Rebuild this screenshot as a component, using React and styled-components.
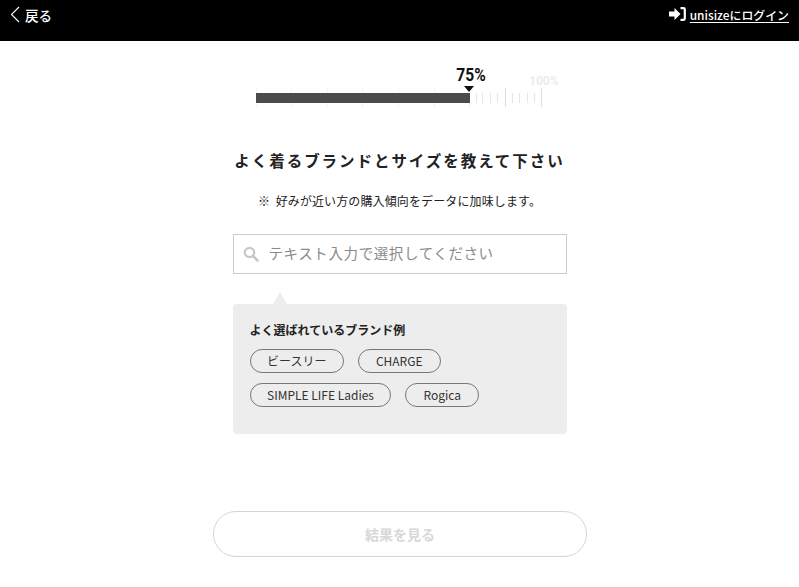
import React from "react";
import styled, { createGlobalStyle } from "styled-components";

const Global = createGlobalStyle`
  html, body { margin: 0; padding: 0; background: #fff; }
  body { font-family: "Noto Sans CJK JP", "Noto Sans", sans-serif; color: #222; overflow: hidden; }
  * { box-sizing: border-box; }
`;

const Page = styled.div`
  width: 799px;
  height: 587px;
  display: flex;
  flex-direction: column;
  align-items: center;
  overflow: hidden;
`;

const Header = styled.header`
  width: 100%;
  height: 41px;
  background: #000;
  color: #fff;
  display: flex;
  align-items: flex-start;
  justify-content: space-between;
  padding: 4px 10px 0 10px;
`;

const Back = styled.a`
  display: flex;
  align-items: center;
  gap: 5px;
  height: 21px;
  font-size: 13.5px;
  font-weight: 500;
  color: #fff;
`;

const Login = styled.a`
  display: flex;
  align-items: center;
  gap: 4px;
  height: 20px;
  font-size: 11.9px;
  font-weight: 500;
  color: #fff;
  text-decoration: underline;
  text-underline-offset: 2px;
`;

const Progress = styled.div`
  width: 300px;
  height: 70px;
  margin: 20px 0 0 1px;
  position: relative;
  flex: none;
`;

const Percent = styled.div`
  position: absolute;
  left: 203px;
  top: 2px;
  width: 36px;
  text-align: center;
  font-family: "Roboto", sans-serif;
  font-size: 19px;
  line-height: 24px;
  font-weight: 700;
  color: #111;
  transform: scaleX(0.82);
`;

const Max = styled.div`
  position: absolute;
  left: 279px;
  top: 13px;
  font-family: "Roboto", sans-serif;
  font-size: 12px;
  line-height: 14px;
  font-weight: 700;
  color: #ececec;
`;

const Marker = styled.div`
  position: absolute;
  left: 214px;
  top: 25px;
  width: 0;
  height: 0;
  border-left: 5px solid transparent;
  border-right: 5px solid transparent;
  border-top: 6px solid #111;
`;

const Scale = styled.svg`
  position: absolute;
  left: 0;
  top: 0;
`;

const Title = styled.h1`
  margin: 18px 0 0;
  font-size: 15.5px;
  line-height: 22px;
  letter-spacing: 1.95px;
  font-weight: 700;
  color: #222;
`;

const Note = styled.p`
  margin: 21px 0 0;
  font-size: 12px;
  line-height: 18px;
  font-weight: 400;
  letter-spacing: 0.12px;
  color: #222;
  white-space: pre;
`;

const Search = styled.div`
  width: 334px;
  height: 40px;
  margin-top: 24px;
  border: 1px solid #ccc;
  display: flex;
  align-items: center;
  gap: 10px;
  padding-left: 9px;
  flex: none;
`;

const Placeholder = styled.span`
  font-size: 14.5px;
  line-height: 20px;
  margin-top: -2px;
  color: #8a8a8a;
  letter-spacing: 0.6px;
`;

const Panel = styled.section`
  position: relative;
  width: 334px;
  height: 130px;
  margin-top: 30px;
  background: #ededed;
  border-radius: 4px;
  padding: 17px 17px 0;
  flex: none;
  &::before {
    content: "";
    position: absolute;
    left: 40px;
    top: -12px;
    border-left: 7px solid transparent;
    border-right: 7px solid transparent;
    border-bottom: 12px solid #ededed;
  }
`;

const PanelTitle = styled.h2`
  margin: 0;
  font-size: 12px;
  line-height: 18px;
  font-weight: 700;
  color: #222;
`;

const Chips = styled.div`
  display: flex;
  flex-wrap: wrap;
  gap: 10px 14px;
  margin-top: 10px;
  width: 260px;
`;

const Chip = styled.span`
  height: 24px;
  padding: 0 ${(p) => p.$pad}px;
  border: 1px solid #777;
  border-radius: 12px;
  font-size: 12px;
  line-height: 22px;
  color: #333;
  white-space: nowrap;
`;

const Submit = styled.button`
  width: 374px;
  height: 46px;
  margin: 77px 0 0 1px;
  flex: none;
  background: #fff;
  border: 1px solid #d5d5d5;
  border-radius: 23px;
  font-family: inherit;
  font-size: 14px;
  font-weight: 700;
  color: #d8d8d8;
`;

const majors = [6, 41, 77, 112, 148, 184, 219, 255, 291];
const minors = [226, 232, 240, 247, 262, 269, 277, 284];

export default function App() {
  return (
    <Page>
      <Global />
      <Header>
        <Back>
          <svg width="10" height="17" viewBox="0 0 10 17" fill="none">
            <path d="M9 1 L1.5 8.5 L9 16" stroke="#fff" strokeWidth="1.1" />
          </svg>
          戻る
        </Back>
        <Login>
          <svg width="17" height="14" viewBox="0 0 17 14">
            <path d="M0 4.5 H5.5 V1 L11.5 7 L5.5 13 V9.5 H0 Z" fill="#fff" />
            <path d="M11.5 1.2 H14.5 Q15.8 1.2 15.8 2.5 V11.5 Q15.8 12.8 14.5 12.8 H11.5" fill="none" stroke="#fff" strokeWidth="2.2" />
          </svg>
          unisizeにログイン
        </Login>
      </Header>
      <Progress>
        <Scale width="300" height="70" viewBox="0 0 300 70">
          {majors.map((x) => (
            <path key={x} d={`M${x + 0.5} 27 V46`} stroke={x > 220 ? "#dedede" : "#f3f3f3"} strokeWidth="1" />
          ))}
          <rect x="6" y="32" width="214" height="10" fill="#4b4b4b" />
          {minors.map((x) => (
            <path key={x} d={`M${x + 0.5} 32 V42`} stroke="#e6e6e6" strokeWidth="1" />
          ))}
        </Scale>
        <Percent>75%</Percent>
        <Max>100%</Max>
        <Marker />
      </Progress>
      <Title>よく着るブランドとサイズを教えて下さい</Title>
      <Note>{"※  好みが近い方の購入傾向をデータに加味します。"}</Note>
      <Search>
        <svg width="16" height="16" viewBox="0 0 16 16" fill="none">
          <circle cx="6.5" cy="6.5" r="4.7" stroke="#c8c8c8" strokeWidth="2.2" />
          <path d="M10 10 L14.5 14.5" stroke="#c8c8c8" strokeWidth="2.6" strokeLinecap="round" />
        </svg>
        <Placeholder>テキスト入力で選択してください</Placeholder>
      </Search>
      <Panel>
        <PanelTitle>よく選ばれているブランド例</PanelTitle>
        <Chips>
          <Chip $pad={16.5}>ビースリー</Chip>
          <Chip $pad={17}>CHARGE</Chip>
          <Chip $pad={16.5}>SIMPLE LIFE Ladies</Chip>
          <Chip $pad={17}>Rogica</Chip>
        </Chips>
      </Panel>
      <Submit>結果を見る</Submit>
    </Page>
  );
}
